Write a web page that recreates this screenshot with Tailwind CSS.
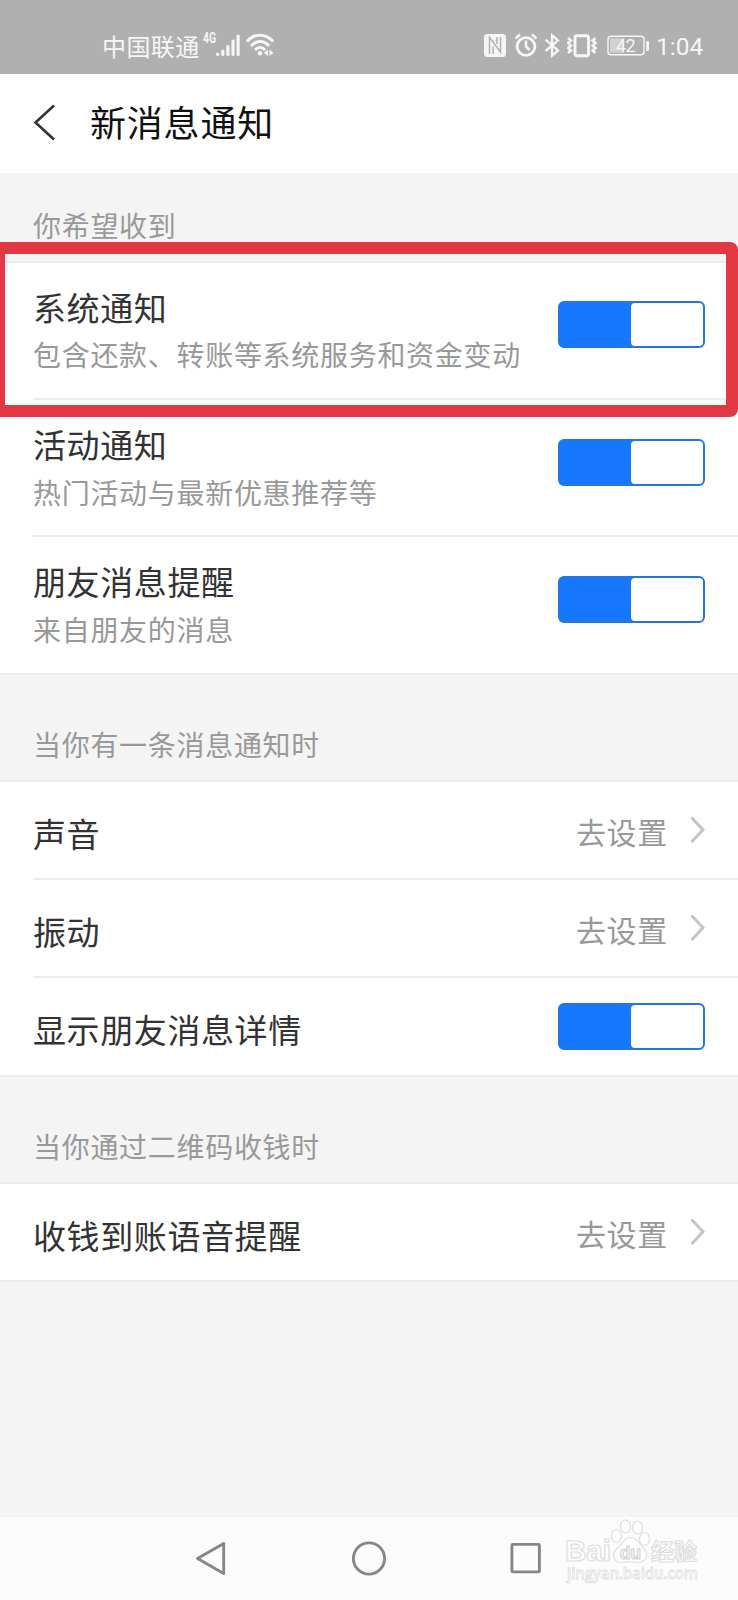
<!DOCTYPE html>
<html lang="zh-CN">
<head>
  <meta charset="UTF-8">
  <title>新消息通知</title>
  <script src="https://cdn.jsdelivr.net/npm/@tailwindcss/browser@4"></script>
</head>
<body class="bg-[#f4f4f4] font-['Noto_Sans_CJK_SC',sans-serif] text-[#333]">
  <div class="relative flex flex-col w-[738px] h-[1600px] overflow-hidden">

    <!-- status bar -->
    <div class="flex h-[74px] bg-[#b0b0b0] text-[#f6f6f6] pl-[102px] pt-[32px]">
      <span class="w-[101px] pt-px text-[24px] tracking-[0.4px] leading-[26px] whitespace-nowrap">中国联通</span>
      <span class="w-[13px] text-[14.5px] leading-[14px] font-bold font-['Roboto',sans-serif] origin-left scale-x-72">4G</span>
      <svg class="w-[24px] h-[26px]" viewBox="0 0 24 26" stroke="currentColor" stroke-width="3.200" stroke-linecap="round">
        <path d="M1.700 22v.5M6.800 19v3.500M11.900 14.500v8M17 9v13.500M22.100 4v18.500" />
      </svg>
      <svg class="ml-[6px] w-[28px] h-[26px]" viewBox="0 0 28 26" fill="none" stroke="currentColor" stroke-width="3">
        <path d="M1 9.500C8 1 20 1 27 9.500M5 14C10 8 18 8 23 14M9 18c2.800-3.500 7.200-3.500 10 0" />
        <circle cx="14" cy="21.300" r="2.300" fill="currentColor" stroke="none" />
        <path d="M22 17.500v6.500l-4-3.200zM23.500 17.500v6.500l4-3.200z" fill="currentColor" stroke="none" />
      </svg>
      <svg class="ml-[210px] w-[22px] h-[26px]" viewBox="0 0 22 26">
        <rect y="2" width="22" height="23" rx="3.500" fill="currentColor" />
        <path d="M5.500 22V5.500L16.500 20V5M9.200 22v-7.500M12.900 5v7" fill="none" stroke="#b0b0b0" stroke-width="1.500" />
      </svg>
      <svg class="ml-[8px] w-[24px] h-[26px]" viewBox="0 0 24 26" fill="none" stroke="currentColor" stroke-width="2.800">
        <circle cx="12" cy="14.500" r="8.900" />
        <path d="M12 8.500v6l3.500 3.500M1.500 6.500l4.500-4M22.500 6.500l-4.500-4" stroke-width="2.500" />
      </svg>
      <svg class="ml-[6px] w-[16px] h-[26px]" viewBox="0 0 16 26" fill="none" stroke="currentColor" stroke-width="2.300">
        <path d="M1.500 7.500l12.500 11-6 5.200V3.300l6 5.200L1.500 19" />
      </svg>
      <svg class="ml-[7px] w-[30px] h-[26px]" viewBox="0 0 30 26" fill="none" stroke="currentColor">
        <rect x="8" y="3.700" width="13.500" height="20" rx="2" stroke-width="2.900" />
        <path d="M1 6l3 2.500-3 2.500 3 2.500-3 2.500 3 2.500-3 2.500M28.500 6l-3 2.500 3 2.500-3 2.500 3 2.500-3 2.500 3 2.500" stroke-width="2.500" />
      </svg>
      <svg class="ml-[10px] w-[42px] h-[26px]" viewBox="0 0 42 26">
        <rect x="1" y="4.300" width="36" height="18.400" rx="3" fill="none" stroke="currentColor" stroke-width="1.400" />
        <rect x="3" y="6.300" width="14" height="14.400" fill="#d2d2d2" />
        <rect x="39.200" y="9" width="2.800" height="10" rx="1" fill="currentColor" />
        <text x="9" y="20" textLength="19.500" font-family="Roboto" font-size="18" fill="currentColor">42</text>
      </svg>
      <span class="ml-[7px] text-[24.5px] leading-[29px] font-['Roboto',sans-serif]">1:04</span>
    </div>

    <!-- title bar -->
    <header class="flex h-[99px] bg-white pl-[33px] pt-[26px]">
      <svg class="mt-[4px] w-[23px] h-[38px]" viewBox="0 0 23 38" fill="none" stroke="#333" stroke-width="2.600">
        <path d="M21 1.500L2.500 18.500 21 35.500" />
      </svg>
      <h1 class="mt-px ml-[34px] text-[36px] tracking-[0.8px] leading-[41px] text-[#111]">新消息通知</h1>
    </header>

    <p class="h-[90px] pt-[37px] pl-[33px] text-[28px] tracking-[0.7px] leading-[30px] text-[#999] border-b-2 border-[#ececec]">你希望收到</p>
    <div class="bg-white pl-[33px] border-b-2 border-[#ececec]">
      <div class="flex h-[137px] pt-[25px] border-b-2 border-[#ececec]">
        <div class="grow">
          <h2 class="text-[33px] tracking-[0.6px] leading-[39px]">系统通知</h2>
          <p class="mt-[12px] text-[28px] tracking-[0.7px] leading-[30px] text-[#999] whitespace-nowrap">包含还款、转账等系统服务和资金变动</p>
        </div>
        <div class="mt-[13px] mr-[33px] w-[147px] h-[47px] shrink-0 rounded-[6px] bg-[#1677ff] border-2 border-[#2678d8] flex justify-end">
          <div class="w-[72px] h-[43px] rounded-[4px] bg-white"></div>
        </div>
      </div>
      <div class="flex h-[137px] pt-[25px] border-b-2 border-[#ececec]">
        <div class="grow">
          <h2 class="text-[33px] tracking-[0.6px] leading-[39px]">活动通知</h2>
          <p class="mt-[13px] text-[28px] tracking-[0.7px] leading-[30px] text-[#999]">热门活动与最新优惠推荐等</p>
        </div>
        <div class="mt-[14px] mr-[33px] w-[147px] h-[47px] shrink-0 rounded-[6px] bg-[#1677ff] border-2 border-[#2678d8] flex justify-end">
          <div class="w-[72px] h-[43px] rounded-[4px] bg-white"></div>
        </div>
      </div>
      <div class="flex h-[136px] pt-[25px]">
        <div class="grow">
          <h2 class="text-[33px] tracking-[0.6px] leading-[39px]">朋友消息提醒</h2>
          <p class="mt-[13px] text-[28px] tracking-[0.7px] leading-[30px] text-[#999]">来自朋友的消息</p>
        </div>
        <div class="mt-[14px] mr-[33px] w-[147px] h-[47px] shrink-0 rounded-[6px] bg-[#1677ff] border-2 border-[#2678d8] flex justify-end">
          <div class="w-[72px] h-[43px] rounded-[4px] bg-white"></div>
        </div>
      </div>
    </div>

    <p class="h-[107px] pt-[54px] pl-[33px] text-[28px] tracking-[0.7px] leading-[30px] text-[#999] border-b-2 border-[#ececec]">当你有一条消息通知时</p>
    <div class="bg-white pl-[33px] border-b-2 border-[#ececec]">
      <div class="flex h-[98px] pt-[32px] border-b-2 border-[#ececec]">
        <h2 class="grow text-[33px] tracking-[0.6px] leading-[38px]">声音</h2>
        <span class="text-[30px] tracking-[0.7px] leading-[35px] text-[#999]">去设置</span>
        <svg class="mt-[2px] ml-[22px] mr-[33px] w-[15px] h-[28px]" viewBox="0 0 15 28" fill="none" stroke="#c4c4c8" stroke-width="3">
          <path d="M1.500 1.500L13 13.800 1.500 26" />
        </svg>
      </div>
      <div class="flex h-[98px] pt-[32px] border-b-2 border-[#ececec]">
        <h2 class="grow text-[33px] tracking-[0.6px] leading-[38px]">振动</h2>
        <span class="text-[30px] tracking-[0.7px] leading-[35px] text-[#999]">去设置</span>
        <svg class="mt-[2px] ml-[22px] mr-[33px] w-[15px] h-[28px]" viewBox="0 0 15 28" fill="none" stroke="#c4c4c8" stroke-width="3">
          <path d="M1.500 1.500L13 13.800 1.500 26" />
        </svg>
      </div>
      <div class="flex h-[97px] pt-[25px]">
        <h2 class="grow mt-[7px] text-[33px] tracking-[0.6px] leading-[39px]">显示朋友消息详情</h2>
        <div class="mr-[33px] w-[147px] h-[47px] shrink-0 rounded-[6px] bg-[#1677ff] border-2 border-[#2678d8] flex justify-end">
          <div class="w-[72px] h-[43px] rounded-[4px] bg-white"></div>
        </div>
      </div>
    </div>

    <p class="h-[107px] pt-[54px] pl-[33px] text-[28px] tracking-[0.7px] leading-[30px] text-[#999] border-b-2 border-[#ececec]">当你通过二维码收钱时</p>
    <div class="bg-white pl-[33px] border-b-2 border-[#ececec]">
      <div class="flex h-[96px] pt-[32px]">
        <h2 class="grow text-[33px] tracking-[0.6px] leading-[38px]">收钱到账语音提醒</h2>
        <span class="text-[30px] tracking-[0.7px] leading-[35px] text-[#999]">去设置</span>
        <svg class="mt-[2px] ml-[22px] mr-[33px] w-[15px] h-[28px]" viewBox="0 0 15 28" fill="none" stroke="#c4c4c8" stroke-width="3">
          <path d="M1.500 1.500L13 13.800 1.500 26" />
        </svg>
      </div>
    </div>

    <!-- android nav keys -->
    <nav class="mt-auto flex h-[83px] bg-[#fcfcfc] pl-[195px] pt-[23px]">
      <svg class="w-[32px] h-[36px]" viewBox="0 0 32 36" fill="none" stroke="#868686" stroke-width="2.900" stroke-linejoin="round">
        <path d="M28.700 3.500v30L2.500 18.500z" />
      </svg>
      <svg class="ml-[124px] w-[36px] h-[36px]" viewBox="0 0 36 36" fill="none" stroke="#868686" stroke-width="2.900">
        <circle cx="18" cy="18.500" r="15.600" />
      </svg>
      <svg class="ml-[122px] w-[34px] h-[36px]" viewBox="0 0 34 36" fill="none" stroke="#868686" stroke-width="2.900">
        <rect x="2.900" y="4.400" width="27.500" height="27.500" rx="1" />
      </svg>
    </nav>

    <!-- highlighted setting -->
    <div class="absolute -left-[7px] top-[242px] w-[745px] h-[175px] border-12 border-[#e23843] rounded-[8px]"></div>

    <!-- site watermark -->
    <svg class="absolute left-[560px] top-[1516px] w-[150px] h-[74px]" viewBox="0 0 150 74" fill="#fefefe" stroke="#dedede" stroke-width="1.200">
      <text x="5" y="45" textLength="46" lengthAdjust="spacingAndGlyphs" font-family="Liberation Sans" font-weight="700" font-size="29">Bai</text>
      <ellipse cx="56.500" cy="20" rx="5" ry="6.500" />
      <ellipse cx="65.500" cy="10.500" rx="5" ry="6.500" />
      <ellipse cx="77.500" cy="11.500" rx="5" ry="6.500" />
      <ellipse cx="84.500" cy="23" rx="5" ry="6.500" />
      <path d="M70 21.500c7 0 9 6 13 10 7 7 3 15-5 15-4 0-5-1-8-1s-5 1-9 1c-8 0-10-9-3-15 5-4 6-10 12-10z" />
      <text x="60" y="43" textLength="21" lengthAdjust="spacingAndGlyphs" font-family="Liberation Sans" font-weight="700" font-size="19" stroke="#d2d2d2">du</text>
      <text x="91" y="44" textLength="46" font-family="Noto Sans CJK SC" font-weight="700" font-size="23">经验</text>
      <text x="7" y="63" textLength="131" lengthAdjust="spacingAndGlyphs" font-family="Open Sans" font-weight="600" font-size="16" stroke-width=".8">jingyan.baidu.com</text>
    </svg>
  </div>
</body>
</html>
